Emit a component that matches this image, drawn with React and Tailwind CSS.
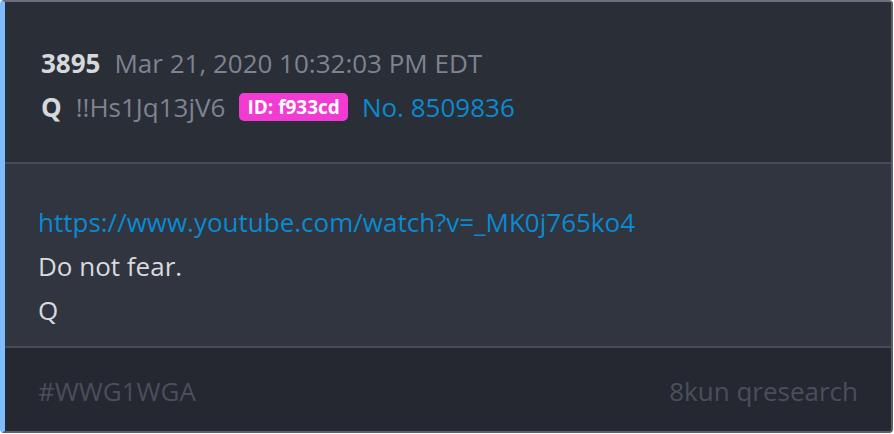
import React from "react";

const post = {
  num: "3895",
  date: "Mar 21, 2020 10:32:03 PM EDT",
  name: "Q",
  trip: "!!Hs1Jq13jV6",
  id: "f933cd",
  no: "No. 8509836",
  link: "https://www.youtube.com/watch?v=_MK0j765ko4",
  lines: ["Do not fear.", "Q"],
};

export default function App() {
  return (
    <div
      className="w-[894px] h-[434px] bg-white"
      style={{ fontFamily: '"Open Sans", sans-serif' }}
    >
      <div className="w-[893px] h-[433px] flex flex-col rounded-[4px] overflow-hidden border-t-2 border-r-2 border-b-2 border-l-[5px] border-t-[#6b7080] border-r-[#5a5f6c] border-b-[#5a5f6c] border-l-[#7dbcff] bg-[#2a2e37]">
        {/* header */}
        <div className="h-[160px] px-[36px] pt-[43px] flex flex-col gap-[8px] bg-[#2a2e37]">
          <div className="flex items-center gap-[14px] text-[26px] leading-[36px]">
            <span className="font-bold text-[#d7d8dc]">{post.num}</span>
            <span className="text-[#7e8391]">{post.date}</span>
          </div>
          <div className="flex items-center gap-[14px] text-[26px] leading-[36px]">
            <span className="font-bold text-[#d7d8dc]">{post.name}</span>
            <span className="text-[#7e8391]">{post.trip}</span>
            <span className="bg-[#f23bd2] text-white font-bold text-[19px] leading-[28px] px-[8px] rounded-[5px]">
              ID: {post.id}
            </span>
            <span className="text-[#0a8ad0]">{post.no}</span>
          </div>
        </div>
        <div className="h-[2px] bg-[#464b57]" />
        {/* body */}
        <div className="h-[182px] px-[33px] pt-[40px] flex flex-col gap-[8px] bg-[#303540] text-[26px] leading-[36px] text-[#d9dade]">
          <a className="text-[#0a8ad0]">{post.link}</a>
          {post.lines.map((l, i) => (
            <div key={i}>{l}</div>
          ))}
        </div>
        <div className="h-[2px] bg-[#464b57]" />
        {/* footer */}
        <div className="flex-1 px-[33px] pt-[4px] flex items-center justify-between bg-[#252831] text-[26px] text-[#4a4f5b]">
          <span>#WWG1WGA</span>
          <span>8kun qresearch</span>
        </div>
      </div>
    </div>
  );
}
